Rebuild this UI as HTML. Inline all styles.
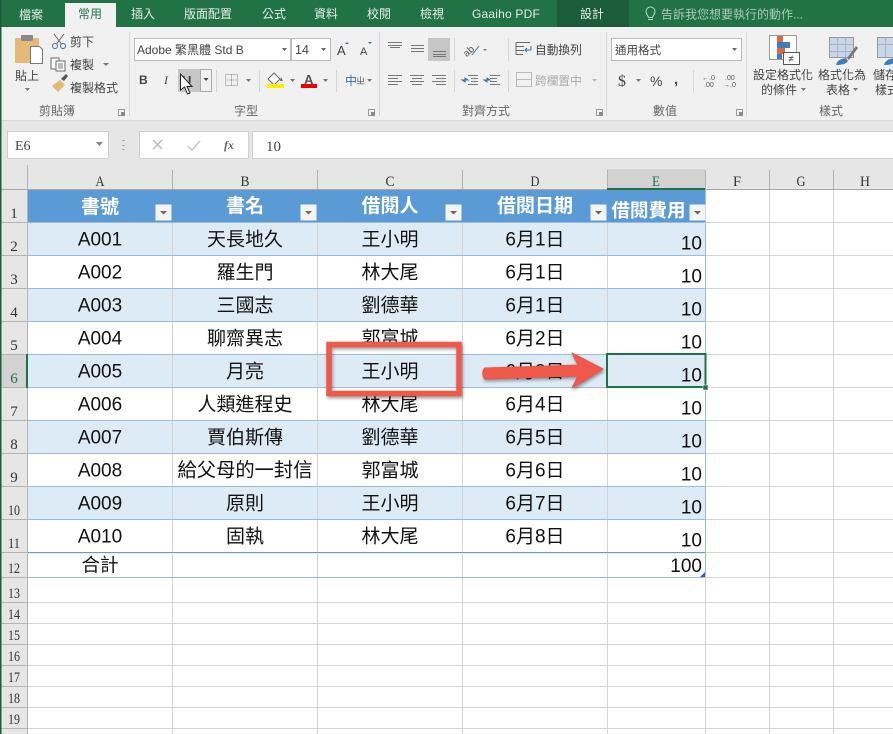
<!DOCTYPE html>
<html><head><meta charset="utf-8">
<style>
html,body{margin:0;padding:0;background:#fff;width:893px;height:734px;overflow:hidden}
svg{display:block}
text{font-family:"Liberation Sans","Noto Sans CJK TC",sans-serif}
.tab{font-size:12px;fill:#e4efe9;text-anchor:middle}
.r{font-size:12px;fill:#444}
.rm{font-size:12px;fill:#444;text-anchor:middle}
.g{font-size:12px;fill:#666;text-anchor:middle}
.dis{font-size:12px;fill:#aaa}
.hd{font-family:"Liberation Serif","Noto Sans CJK TC",serif;font-size:15px;fill:#333;text-anchor:middle}
.rn{font-family:"Liberation Serif",serif;font-size:15px;fill:#333;text-anchor:middle}
.c{font-size:19px;fill:#111;text-anchor:middle}
.n{font-size:19px;fill:#111;text-anchor:end}
.th{font-size:19px;fill:#fff;text-anchor:middle;font-weight:700}
.s{font-size:18.5px;fill:#111;text-anchor:middle}
.l{stroke:#d4d4d4;stroke-width:1;fill:none}
.tl{stroke:#9dbcdc;stroke-width:1;fill:none}
.ic{stroke:#666;stroke-width:1;fill:none}
.sh{filter:drop-shadow(1px 2px 1.5px rgba(0,0,0,.4))}
</style></head><body>
<svg width="893" height="734" viewBox="0 0 893 734" xmlns="http://www.w3.org/2000/svg">
<rect width="893" height="734" fill="#fff"/>
<!-- title/tab bar -->
<rect width="893" height="27" fill="#217346"/>
<rect x="557" y="0" width="72" height="27" fill="#1b5c39"/>
<rect x="65" y="3" width="51" height="24" fill="#f1f1f1"/>
<text class="tab" x="31" y="19">檔案</text>
<text class="tab" x="90" y="18" style="fill:#217346">常用</text>
<text class="tab" x="143" y="18">插入</text>
<text class="tab" x="208" y="18">版面配置</text>
<text class="tab" x="274" y="18">公式</text>
<text class="tab" x="326" y="18">資料</text>
<text class="tab" x="379" y="18">校閱</text>
<text class="tab" x="432" y="18">檢視</text>
<text class="tab" x="506" y="18" style="letter-spacing:.2px">Gaaiho PDF</text>
<text class="tab" x="592" y="18">設計</text>
<path d="M648 19.500h5M648.500 17.500c0-1.500-2.500-3-2.500-6a4.500 4.500 0 0 1 9 0c0 3-2.500 4.500-2.500 6z" fill="none" stroke="#b9d5c6" stroke-width="1"/>
<text x="661" y="18.500" style="font-size:12px;fill:#a9cbb8">告訴我您想要執行的動作...</text>
<!-- ribbon -->
<rect y="27" width="893" height="93" fill="#f1f1f1"/>
<rect y="120" width="893" height="70" fill="#e6e6e6"/>
<rect y="120" width="893" height="1" fill="#d8d8d8"/>
<path d="M129.500 32V116M379.500 32V116M606.500 32V116M746.500 32V116" stroke="#d6d6d6"/>
<!-- clipboard -->
<rect x="15" y="38" width="24" height="25" rx="1" fill="#e3bb78"/>
<rect x="21" y="35" width="12" height="6" rx="1" fill="#8a8a8a"/>
<path d="M30.500 46.500h9l3 3v14h-12z" fill="#fff" stroke="#777"/>
<text class="rm" x="27" y="80">貼上</text>
<path d="M25 88h5l-2.500 3z" fill="#777"/>
<g stroke="#3f6f9f" fill="none"><circle cx="55" cy="46" r="2.500"/><circle cx="63" cy="46" r="2.500"/><path d="M56.500 44L64 34M61.500 44L54 34" stroke="#666"/></g>
<text class="r" x="70" y="46">剪下</text>
<g fill="#fff" stroke="#666"><rect x="51" y="58" width="8" height="11"/><rect x="56" y="61" width="9" height="10"/></g>
<path d="M58 64h5M58 66h5M58 68h5" stroke="#777"/>
<text class="r" x="70" y="69">複製</text>
<path d="M103 63h6l-3 3z" fill="#777"/>
<path d="M52 86l8-6 5 5-7 7z" fill="#e3bb78"/>
<path d="M61 79l5-5 2 2-4 5z" fill="#555"/>
<text class="r" x="70" y="92">複製格式</text>
<text class="g" x="57" y="115">剪貼簿</text>
<g id="dl"><path d="M118.500 109.500h6v6h-6z" fill="none" stroke="#999"/><path d="M121 112h4v4h-4z" fill="#888"/></g>
<!-- font -->
<rect x="134.500" y="38.500" width="156" height="22" fill="#fff" stroke="#bbb"/>
<rect x="291.500" y="38.500" width="39" height="22" fill="#fff" stroke="#bbb"/>
<text class="r" x="137" y="54">Adobe 繁黑體 Std B</text>
<path d="M282 48h5l-2.500 3z" fill="#666"/>
<text class="r" x="295" y="54" style="font-size:12.500px">14</text>
<path d="M321 48h5l-2.500 3z" fill="#666"/>
<text x="337" y="55" style="font-size:13px;fill:#444">A</text><path d="M345 44l2-2 2 2z" fill="#3f6f9f"/>
<text x="360" y="55" style="font-size:11px;fill:#444">A</text><path d="M368 42h4l-2 2z" fill="#3f6f9f"/>
<text x="139" y="84" style="font-size:12px;font-weight:700;fill:#444">B</text>
<text x="164" y="84" style="font-size:12px;font-style:italic;font-family:'Liberation Serif',serif;fill:#444">I</text>
<rect x="178" y="69" width="22" height="23" fill="#c6c6c6"/>
<rect x="200.500" y="69.500" width="11" height="22" fill="#f1f1f1" stroke="#aaa"/>
<text x="182" y="85" style="font-size:13px;fill:#444;font-weight:700">U</text>
<path d="M203.500 78h5l-2.500 3z" fill="#444"/>
<path d="M180.500 74l0 16 4-3 3 7 2.500-1-3-6.500 5 0z" fill="#fff" stroke="#222"/>
<path d="M216.500 70v22" stroke="#d6d6d6"/>
<path d="M225.500 74.500h12v11h-12zM231.500 74.500v11M225.500 80h12" fill="none" stroke="#888" stroke-dasharray="1 1"/>
<path d="M246 79h5l-2.500 3z" fill="#777"/>
<path d="M259.500 70v22" stroke="#d6d6d6"/>
<path d="M268 79l6-6 6 6-6 6z" fill="#fff" stroke="#666"/><path d="M281 77l2 4h-3z" fill="#3f6f9f"/>
<rect x="267" y="84" width="17" height="4" fill="#ffef00"/>
<path d="M290 79h5l-2.500 3z" fill="#777"/>
<text x="304" y="84" style="font-size:13px;font-weight:700;fill:#555">A</text>
<rect x="301" y="84" width="16" height="4" fill="#e00"/>
<path d="M323 79h5l-2.500 3z" fill="#777"/>
<path d="M336.500 70v22" stroke="#d6d6d6"/>
<text x="345" y="85" style="font-size:12px;fill:#3f6f9f">中</text>
<text x="356" y="84" style="font-size:9px;fill:#555">ㄓ</text>
<path d="M367 79h5l-2.500 3z" fill="#777"/>
<text class="g" x="246" y="115">字型</text>
<use href="#dl" x="250"/>
<!-- alignment -->
<rect x="428" y="38" width="22" height="23" fill="#c6c6c6"/>
<path d="M388 42.500h14M388 45.500h14M390 47.500h10M411 45.500h13M411 48.500h13M411 51.500h13M433 51.500h13M433 54.500h13M433 56.500h13" stroke="#777"/>
<path d="M388 75.500h14M388 78.500h10M388 81.500h14M388 84.500h10M410 75.500h14M412 78.500h10M410 81.500h14M412 84.500h10M432 75.500h14M436 78.500h10M432 81.500h14M436 84.500h10" stroke="#777"/>
<path d="M454.500 38v23M454.500 70v22M508.500 38v23M508.500 70v22" stroke="#d6d6d6"/>
<g transform="rotate(-40 470 49)"><text x="462" y="53" style="font-size:10px;fill:#555">ab</text></g>
<path d="M472 55l7-9" stroke="#3f6f9f"/><path d="M483 49h4l-2 2z" fill="#777"/>
<path d="M468 75.500h10M471 78.500h7M471 81.500h7M468 84.500h10M490 75.500h10M490 78.500h7M490 81.500h7M490 84.500h10" stroke="#777"/>
<path d="M462 80h6l-3-2v4zM484 80h6l-3-2v4z" fill="#3f6f9f" stroke="#3f6f9f"/>
<path d="M516 42.500h14M516 46.500h8M516 50.500h8M516 54.500h7M516 42.500v12" stroke="#666" fill="none"/>
<path d="M531 46v4h-6m2-2l-2 2 2 2" stroke="#3f6f9f" fill="none"/>
<text class="r" x="535" y="54" style="font-size:11.700px">自動換列</text>
<path d="M516.500 72.500h15v14h-15zM516.500 79.500h15" fill="none" stroke="#bbb"/>
<text class="dis" x="535" y="85" style="font-size:11.700px">跨欄置中</text>
<path d="M592 79h5l-2.500 3z" fill="#bbb"/>
<text class="g" x="486" y="115">對齊方式</text>
<use href="#dl" x="478"/>
<!-- number -->
<rect x="611.500" y="38.500" width="130" height="22" fill="#fff" stroke="#bbb"/>
<text class="r" x="615" y="54" style="font-size:11.500px">通用格式</text>
<path d="M732 48h5l-2.500 3z" fill="#666"/>
<text x="618" y="86" style="font-size:16px;fill:#444;font-family:'Liberation Serif',serif">$</text>
<path d="M636 79h5l-2.500 3z" fill="#777"/>
<text x="650" y="86" style="font-size:14px;fill:#444">%</text>
<text x="674" y="84" style="font-size:15px;fill:#444;font-weight:700">,</text>
<path d="M693.500 70v22" stroke="#d6d6d6"/>
<text x="702" y="80" style="font-size:7px;fill:#555">←.0</text><text x="704" y="87" style="font-size:7px;fill:#555">.00</text>
<text x="725" y="80" style="font-size:7px;fill:#555">.00</text><text x="723" y="87" style="font-size:7px;fill:#555">→.0</text>
<text class="g" x="665" y="115">數值</text>
<use href="#dl" x="618"/>
<!-- styles -->
<g stroke="#9a9a9a" fill="#fff"><rect x="769.500" y="35.500" width="27" height="24"/></g>
<rect x="777" y="36" width="6" height="6" fill="#d96a43"/><rect x="777" y="42" width="13" height="6" fill="#3f7cbf"/><rect x="777" y="48" width="8" height="6" fill="#d96a43"/><rect x="777" y="54" width="5" height="5" fill="#3f7cbf"/>
<rect x="783.500" y="52.500" width="16" height="12" fill="#fff" stroke="#555"/>
<text x="791" y="62" style="font-size:10px;fill:#333;text-anchor:middle">≠</text>
<rect x="829.500" y="37.500" width="24" height="20" fill="#c7d6e8" stroke="#999"/>
<path d="M829 44.500h24M829 51.500h24M837.500 37v20M845.500 37v20" stroke="#aab3bd"/>
<path d="M836 65c2-6 6-6 10-7l2 3c-2 3-6 4-12 4z" fill="#3f7cbf"/><path d="M847 58l9-12 2 2-9 12z" fill="#777"/>
<rect x="877.500" y="37.500" width="25" height="20" fill="#c7d6e8" stroke="#999"/><path d="M878 44.500h25M885.500 37v20" stroke="#aab3bd"/>
<path d="M884 65c2-6 6-6 10-7l2 3c-2 3-6 4-12 4z" fill="#3f7cbf"/>
<text class="rm" x="783" y="79">設定格式化</text>
<text class="rm" x="779" y="94">的條件</text><path d="M801 88h5l-2.500 3z" fill="#777"/>
<text class="rm" x="842" y="79">格式化為</text>
<text class="rm" x="838" y="94">表格</text><path d="M853 88h5l-2.500 3z" fill="#777"/>
<text class="r" x="873" y="79">儲存</text>
<text class="r" x="875" y="94">樣式</text>
<text class="g" x="831" y="115">樣式</text>
<!-- formula bar -->
<rect x="7.500" y="131.500" width="101" height="27" fill="#fff" stroke="#d0d0d0"/>
<text x="15" y="150" style="font-family:'Liberation Serif',serif;font-size:14px;fill:#444">E6</text>
<path d="M96 142h7l-3.500 4z" fill="#888"/>
<path d="M123.500 140v1M123.500 145v1M123.500 149v1" stroke="#999" stroke-width="2"/>
<rect x="139.500" y="131.500" width="109" height="27" fill="#fff" stroke="#d0d0d0"/>
<path d="M153 140l9 9M162 140l-9 9" stroke="#bbb" stroke-width="1.500"/>
<path d="M188 146l4 4 8-9" stroke="#c4c4c4" stroke-width="1.500" fill="none"/>
<text x="224" y="149" style="font-family:'Liberation Serif',serif;font-style:italic;font-weight:700;font-size:12px;fill:#666">fx</text>
<rect x="252.500" y="131.500" width="650" height="27" fill="#fff" stroke="#d0d0d0"/>
<text x="266" y="151" style="font-family:'Liberation Serif',serif;font-size:15px;fill:#444">10</text>
<!-- headers -->
<rect x="0" y="165" width="893" height="24" fill="#e6e6e6"/>
<rect x="0" y="189" width="27" height="545" fill="#e6e6e6"/>
<rect x="607" y="169" width="98" height="20" fill="#d2d2d2"/>
<path d="M27.500 165V734M172.500 170V189M317.500 170V189M462.500 170V189M607.500 170V189M705.500 170V189M769.500 170V189M833.500 170V189" stroke="#b4b4b4"/>
<path d="M0 189.500H893" stroke="#a8a8a8"/>
<path d="M0 222.500H27M0 255.500H27M0 288.500H27M0 321.500H27M0 354.500H27M0 387.500H27M0 420.500H27M0 453.500H27M0 486.500H27M0 519.500H27M0 552.500H27M0 577.500H27M0 602.500H27M0 623.500H27M0 644.500H27M0 665.500H27M0 686.500H27M0 707.500H27M0 728.500H27" stroke="#b4b4b4"/>
<rect x="0" y="355" width="27" height="32" fill="#d2d2d2"/>
<rect x="26" y="354" width="2" height="34" fill="#217346"/>
<rect x="607" y="188" width="98" height="2" fill="#217346"/>
<text class="hd" x="100" y="186" textLength="9" lengthAdjust="spacingAndGlyphs">A</text><text class="hd" x="245" y="186" textLength="9" lengthAdjust="spacingAndGlyphs">B</text><text class="hd" x="390" y="186" textLength="9" lengthAdjust="spacingAndGlyphs">C</text><text class="hd" x="535" y="186" textLength="9" lengthAdjust="spacingAndGlyphs">D</text><text class="hd" x="656" y="186" style="fill:#217346" textLength="8" lengthAdjust="spacingAndGlyphs">E</text><text class="hd" x="737" y="186" textLength="8" lengthAdjust="spacingAndGlyphs">F</text><text class="hd" x="801" y="186" textLength="9" lengthAdjust="spacingAndGlyphs">G</text><text class="hd" x="865" y="186" textLength="10" lengthAdjust="spacingAndGlyphs">H</text>
<g>
<text class="rn" x="14" y="218">1</text><text class="rn" x="14" y="251">2</text><text class="rn" x="14" y="284">3</text><text class="rn" x="14" y="317">4</text><text class="rn" x="14" y="350">5</text><text class="rn" x="14" y="383" style="fill:#217346">6</text><text class="rn" x="14" y="416">7</text><text class="rn" x="14" y="449">8</text><text class="rn" x="14" y="482">9</text><text class="rn" x="14" y="515" textLength="12" lengthAdjust="spacingAndGlyphs">10</text><text class="rn" x="14" y="548" textLength="12" lengthAdjust="spacingAndGlyphs">11</text><text class="rn" x="14" y="573" textLength="12" lengthAdjust="spacingAndGlyphs">12</text><text class="rn" x="14" y="598" textLength="12" lengthAdjust="spacingAndGlyphs">13</text><text class="rn" x="14" y="619" textLength="12" lengthAdjust="spacingAndGlyphs">14</text><text class="rn" x="14" y="640" textLength="12" lengthAdjust="spacingAndGlyphs">15</text><text class="rn" x="14" y="661" textLength="12" lengthAdjust="spacingAndGlyphs">16</text><text class="rn" x="14" y="682" textLength="12" lengthAdjust="spacingAndGlyphs">17</text><text class="rn" x="14" y="703" textLength="12" lengthAdjust="spacingAndGlyphs">18</text><text class="rn" x="14" y="724" textLength="12" lengthAdjust="spacingAndGlyphs">19</text>
</g>
<!-- gridlines -->
<path class="l" d="M705.500 190V734M769.500 190V734M833.500 190V734M172.500 577V734M317.500 577V734M462.500 577V734M607.500 577V734"/>
<path class="l" d="M706 222.500H893M706 255.500H893M706 288.500H893M706 321.500H893M706 354.500H893M706 387.500H893M706 420.500H893M706 453.500H893M706 486.500H893M706 519.500H893M706 552.500H893M706 577.500H893M28 602.500H893M28 623.500H893M28 644.500H893M28 665.500H893M28 686.500H893M28 707.500H893M28 728.500H893"/>
<!-- table -->
<rect x="28" y="190" width="677" height="32" fill="#5b9bd5"/>
<rect x="28" y="223" width="677" height="32" fill="#ddebf7"/>
<rect x="28" y="289" width="677" height="32" fill="#ddebf7"/>
<rect x="28" y="355" width="677" height="32" fill="#ddebf7"/>
<rect x="28" y="421" width="677" height="32" fill="#ddebf7"/>
<rect x="28" y="487" width="677" height="32" fill="#ddebf7"/>
<path class="l" d="M172.500 223V552M317.500 223V552M462.500 223V552M607.500 223V552M172.500 553V577M317.500 553V577M462.500 553V577M607.500 553V577"/>
<path class="tl" d="M28 222.500H705M28 255.500H705M28 288.500H705M28 321.500H705M28 354.500H705M28 387.500H705M28 420.500H705M28 453.500H705M28 486.500H705M28 519.500H705M28 577.500H705M705.500 190V577"/>
<path d="M28 552.500H705" stroke="#6e9bbd" stroke-width="1"/><path d="M28 553.500H705" stroke="#e6eef5"/>
<!-- header row -->
<text class="th" x="100" y="213">書號</text><text class="th" x="245" y="212">書名</text><text class="th" x="390" y="212">借閱人</text><text class="th" x="535" y="212">借閱日期</text><text class="th" x="648.500" y="217" style="font-size:18.500px">借閱費用</text>
<g id="fb"><rect x="155.500" y="204.500" width="16" height="16" fill="#f4f4f4"/><path d="M160 211h7l-3.500 3.500z" fill="#666"/></g>
<use href="#fb" x="145"/><use href="#fb" x="290"/><use href="#fb" x="435"/><use href="#fb" x="534"/>
<!-- data -->
<text class="c" x="100" y="245.500">A001</text><text class="c" x="245" y="245.500">天長地久</text><text class="c" x="390" y="245.500">王小明</text><text class="c" x="535" y="245.500">6月1日</text><text class="n" x="702" y="249.500">10</text>
<text class="c" x="100" y="278.500">A002</text><text class="c" x="245" y="278.500">羅生門</text><text class="c" x="390" y="278.500">林大尾</text><text class="c" x="535" y="278.500">6月1日</text><text class="n" x="702" y="282.500">10</text>
<text class="c" x="100" y="311.500">A003</text><text class="c" x="245" y="311.500">三國志</text><text class="c" x="390" y="311.500">劉德華</text><text class="c" x="535" y="311.500">6月1日</text><text class="n" x="702" y="315.500">10</text>
<text class="c" x="100" y="344.500">A004</text><text class="c" x="245" y="344.500">聊齋異志</text><text class="c" x="390" y="344.500">郭富城</text><text class="c" x="535" y="344.500">6月2日</text><text class="n" x="702" y="348.500">10</text>
<text class="c" x="100" y="377.500">A005</text><text class="c" x="245" y="377.500">月亮</text><text class="c" x="390" y="377.500">王小明</text><text class="c" x="535" y="377.500">6月3日</text><text class="n" x="702" y="381.500">10</text>
<text class="c" x="100" y="410.500">A006</text><text class="c" x="245" y="410.500">人類進程史</text><text class="c" x="390" y="410.500">林大尾</text><text class="c" x="535" y="410.500">6月4日</text><text class="n" x="702" y="414.500">10</text>
<text class="c" x="100" y="443.500">A007</text><text class="c" x="245" y="443.500">賈伯斯傳</text><text class="c" x="390" y="443.500">劉德華</text><text class="c" x="535" y="443.500">6月5日</text><text class="n" x="702" y="447.500">10</text>
<text class="c" x="100" y="476.500">A008</text><text class="c" x="245" y="476.500" style="font-size:19.300px">給父母的一封信</text><text class="c" x="390" y="476.500">郭富城</text><text class="c" x="535" y="476.500">6月6日</text><text class="n" x="702" y="480.500">10</text>
<text class="c" x="100" y="509.500">A009</text><text class="c" x="245" y="509.500">原則</text><text class="c" x="390" y="509.500">王小明</text><text class="c" x="535" y="509.500">6月7日</text><text class="n" x="702" y="513.500">10</text>
<text class="c" x="100" y="542.500">A010</text><text class="c" x="245" y="542.500">固執</text><text class="c" x="390" y="542.500">林大尾</text><text class="c" x="535" y="542.500">6月8日</text><text class="n" x="702" y="546.500">10</text>
<text class="s" x="100" y="571.500">合計</text><text class="n" x="702" y="572">100</text>
<path d="M700 577h5v-5z" fill="#3f5fa8"/>
<!-- selection -->
<rect x="607" y="354" width="98.500" height="33" fill="none" stroke="#217346" stroke-width="2"/>
<rect x="703" y="385" width="5" height="5" fill="#217346" stroke="#fff" stroke-width=".5"/>
<!-- annotations -->
<rect class="sh" x="329" y="344.500" width="130" height="49" fill="none" stroke="#f0594a" stroke-width="5.500"/>
<path class="sh" d="M484.500 368Q481 373 484.500 379L578 376L572 388L603 369L572 353L578 365Z" fill="#f0594a" stroke="#ee5544" stroke-linejoin="round"/>
<!-- left window edge -->
<rect x="0" y="0" width="1.500" height="734" fill="#1d5c3c"/>
</svg>
</body></html>
